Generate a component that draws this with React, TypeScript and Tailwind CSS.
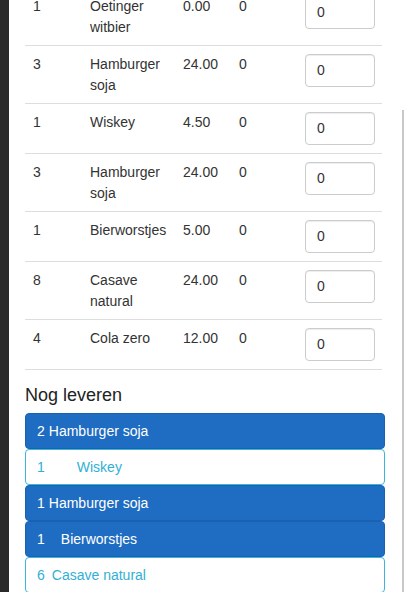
const rows = [
  { qty: "1", name: "Oetinger witbier", price: "0.00", done: "0" },
  { qty: "3", name: "Hamburger soja", price: "24.00", done: "0" },
  { qty: "1", name: "Wiskey", price: "4.50", done: "0" },
  { qty: "3", name: "Hamburger soja", price: "24.00", done: "0" },
  { qty: "1", name: "Bierworstjes", price: "5.00", done: "0" },
  { qty: "8", name: "Casave natural", price: "24.00", done: "0" },
  { qty: "4", name: "Cola zero", price: "12.00", done: "0" },
];

const todo = [
  { qty: "2", name: "Hamburger soja", gap: "ml-[4px]", primary: true },
  { qty: "1", name: "Wiskey", gap: "ml-[32px]", primary: false },
  { qty: "1", name: "Hamburger soja", gap: "ml-[4px]", primary: true },
  { qty: "1", name: "Bierworstjes", gap: "ml-[16px]", primary: true },
  { qty: "6", name: "Casave natural", gap: "ml-[7px]", primary: false },
];

export default function App() {
  return (
    <div className="flex min-h-[592px] overflow-hidden bg-white font-['Liberation_Sans',Arial,sans-serif] text-[14px] text-[#333]">
      <div className="w-[9px] shrink-0 bg-[#2a2a2a]" />

      <div className="w-[376px] shrink-0 pl-[16px]">
        <table className="-mt-[13px] w-[357px] table-fixed border-collapse leading-[20.5px]">
          <colgroup>
            <col className="w-[57px]" />
            <col className="w-[93px]" />
            <col className="w-[56px]" />
            <col className="w-[66px]" />
            <col className="w-[85px]" />
          </colgroup>
          <tbody>
            {rows.map((r, i) => (
              <tr key={i} className="border-y border-[#ddd]">
                <td className="p-[8px] align-top">{r.qty}</td>
                <td className="p-[8px] align-top">{r.name}</td>
                <td className="p-[8px] align-top">{r.price}</td>
                <td className="p-[8px] align-top">{r.done}</td>
                <td className="p-[8px] align-top">
                  <div className="flex h-[33px] w-[70px] items-center rounded-[4px] border border-[#ccc] px-[11px] shadow-[inset_0_1px_1px_rgba(0,0,0,0.075)]">
                    0
                  </div>
                </td>
              </tr>
            ))}
          </tbody>
        </table>

        <h4 className="mt-[15px] mb-[8px] text-[18px] leading-[20px] font-normal text-[#222]">
          Nog leveren
        </h4>

        <div className="flex w-[360px] flex-col">
          {todo.map((t, i) => (
            <div
              key={i}
              className={`flex h-[36px] items-center rounded-[4px] border px-[11px] leading-[20px] ${
                t.primary
                  ? "border-[#1a61b0] bg-[#1f6dc2] text-white"
                  : "border-[#3bb6dc] bg-white text-[#31b0d5]"
              }`}
            >
              <span>{t.qty}</span>
              <span className={t.gap}>{t.name}</span>
            </div>
          ))}
        </div>
      </div>

      <div className="flex flex-1 justify-end">
        <div className="mt-[110px] mr-[1px] w-[2px] bg-[#c8c8c8]" />
      </div>
    </div>
  );
}
